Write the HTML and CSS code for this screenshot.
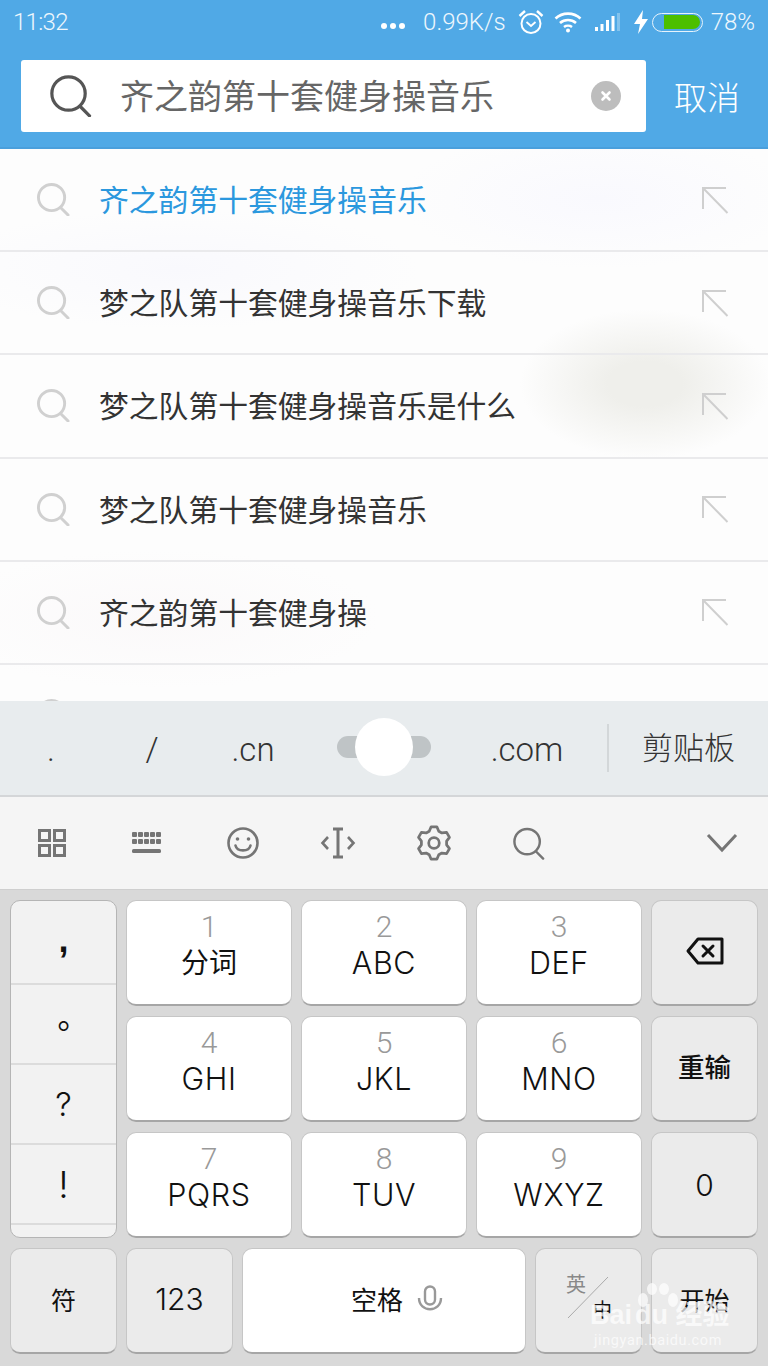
FILE: index.html
```html
<!DOCTYPE html>
<html lang="zh-CN">

<head>
    <meta charset="UTF-8">
    <meta name="viewport" content="width=device-width, initial-scale=1.0">
    <title>搜索</title>
    <link rel="stylesheet" href="styles.css">
</head>

<body>

    <svg class="defs" width="0" height="0">
        <symbol id="i-search" viewBox="0 0 34 34">
            <circle cx="15" cy="15" r="13.5" fill="none" stroke="currentColor" />
            <path d="M24.5 25.5L32 33" fill="none" stroke="currentColor" stroke-linecap="round" />
        </symbol>
        <symbol id="i-jump" viewBox="0 0 28 28">
            <path d="M25 2H2V23M2 2L26.5 27" fill="none" stroke="currentColor" stroke-width="2" />
        </symbol>
    </svg>

    <header class="top">
        <div class="status">
            <span class="clock">11:32</span>
            <div class="status-right">
                <span class="dots"><i></i><i></i><i></i></span>
                <span class="speed">0.99K/s</span>
                <svg class="ic-alarm" width="26" height="26" viewBox="0 0 26 26" fill="none" stroke="#fff" stroke-width="2">
                    <circle cx="13" cy="14.5" r="9.5" />
                    <path d="M8.5 13l4.5 4 4.5-4" stroke-width="1.8" />
                    <path d="M1.5 7L7 2M24.5 7L19 2" stroke-width="2.4" />
                </svg>
                <svg class="ic-wifi" width="28" height="22" viewBox="0 0 28 22" fill="none" stroke="#fff" stroke-width="2.6">
                    <path d="M1.5 7.5C8.5 1 19.5 1 26.5 7.5" />
                    <path d="M6 12C10.5 8 17.5 8 22 12" />
                    <path d="M10 16C12.2 14.4 15.8 14.4 18 16" />
                    <circle cx="14" cy="19.5" r="2" fill="#fff" stroke="none" />
                </svg>
                <svg class="ic-signal" width="27" height="18" viewBox="0 0 27 18">
                    <rect x="0" y="14" width="3" height="4" fill="#fff" />
                    <rect x="5.5" y="11" width="3" height="7" fill="#fff" />
                    <rect x="11" y="7" width="3" height="11" fill="#fff" />
                    <rect x="16.500" y="3" width="3" height="15" fill="#fff" />
                    <rect x="22" y="0" width="3" height="18" fill="#fff" opacity=".3" />
                </svg>
                <svg class="ic-bolt" width="14" height="24" viewBox="0 0 14 24">
                    <path d="M9 0L0 14H6L4 24L14 9H8Z" fill="#fff" />
                </svg>
                <span class="battery"><span class="battery-fill"></span></span>
                <span class="percent">78%</span>
            </div>
        </div>
        <div class="search-row">
            <div class="search-box">
                <svg class="search-icon"><use href="#i-search" /></svg>
                <span class="search-text">齐之韵第十套健身操音乐</span>
                <svg class="search-clear" width="30" height="30" viewBox="0 0 30 30">
                    <circle cx="15" cy="15" r="15" fill="#bdbdbd" />
                    <path d="M11.500 11.500l7 7M18.500 11.500l-7 7" stroke="#fff" stroke-width="2.600" stroke-linecap="round" />
                </svg>
            </div>
            <span class="cancel">取消</span>
        </div>
    </header>

    <ul class="list">
        <li class="row">
            <svg class="row-search"><use href="#i-search" /></svg>
            <span class="row-text active">齐之韵第十套健身操音乐</span>
            <svg class="row-jump"><use href="#i-jump" /></svg>
        </li>
        <li class="row">
            <svg class="row-search"><use href="#i-search" /></svg>
            <span class="row-text">梦之队第十套健身操音乐下载</span>
            <svg class="row-jump"><use href="#i-jump" /></svg>
        </li>
        <li class="row">
            <svg class="row-search"><use href="#i-search" /></svg>
            <span class="row-text">梦之队第十套健身操音乐是什么</span>
            <svg class="row-jump"><use href="#i-jump" /></svg>
        </li>
        <li class="row">
            <svg class="row-search"><use href="#i-search" /></svg>
            <span class="row-text">梦之队第十套健身操音乐</span>
            <svg class="row-jump"><use href="#i-jump" /></svg>
        </li>
        <li class="row">
            <svg class="row-search"><use href="#i-search" /></svg>
            <span class="row-text">齐之韵第十套健身操</span>
            <svg class="row-jump"><use href="#i-jump" /></svg>
        </li>
        <li class="row">
            <svg class="row-search"><use href="#i-search" /></svg>
        </li>
    </ul>

    <div class="suggest">
        <span class="sug sug-dot">.</span>
        <span class="sug sug-slash">/</span>
        <span class="sug sug-cn">.cn</span>
        <span class="sug-slider"><span class="sug-track"></span><span class="sug-thumb"></span></span>
        <span class="sug sug-com">.com</span>
        <span class="sug-clip">剪贴板</span>
    </div>

    <div class="toolbar">
        <span class="tool">
            <svg width="36" height="36" viewBox="0 0 36 36" fill="none" stroke="#757575" stroke-width="3">
                <rect x="5.500" y="5.500" width="10" height="10" />
                <rect x="20.500" y="5.500" width="10" height="10" />
                <rect x="5.500" y="20.500" width="10" height="10" />
                <rect x="20.500" y="20.500" width="10" height="10" />
            </svg>
        </span>
        <span class="tool">
            <svg width="36" height="36" viewBox="0 0 36 36" fill="#757575">
                <rect x="3" y="7" width="5" height="5" rx="1" /><rect x="9" y="7" width="5" height="5" rx="1" /><rect x="15" y="7" width="5" height="5" rx="1" /><rect x="21" y="7" width="5" height="5" rx="1" /><rect x="27" y="7" width="5" height="5" rx="1" />
                <rect x="3" y="14" width="5" height="5" rx="1" /><rect x="9" y="14" width="5" height="5" rx="1" /><rect x="15" y="14" width="5" height="5" rx="1" /><rect x="21" y="14" width="5" height="5" rx="1" /><rect x="27" y="14" width="5" height="5" rx="1" />
                <rect x="3" y="24" width="29" height="4" rx="1.500" />
            </svg>
        </span>
        <span class="tool">
            <svg width="36" height="36" viewBox="0 0 36 36" fill="none" stroke="#757575" stroke-width="2.6">
                <circle cx="18" cy="18" r="14.500" />
                <circle cx="12.500" cy="14" r="1.800" fill="#757575" stroke="none" />
                <circle cx="23.500" cy="14" r="1.800" fill="#757575" stroke="none" />
                <path d="M10.500 20.500C12 27 24 27 25.500 20.500" stroke-linecap="round" />
            </svg>
        </span>
        <span class="tool">
            <svg width="36" height="36" viewBox="0 0 36 36" fill="none" stroke="#757575" stroke-width="2.6">
                <path d="M8 12L2.500 18L8 24M28 12L33.500 18L28 24" />
                <path d="M18 4V32M13 4H23M13 32H23" stroke-width="3" />
            </svg>
        </span>
        <span class="tool">
            <svg width="36" height="36" viewBox="0 0 34 34" fill="none" stroke="#757575" stroke-width="2.6" stroke-linejoin="round">
                <path d="M14.300 1.700L19.700 1.700L21.500 5.900L24.400 7.500L28.900 7L31.600 11.700L28.900 15.300L28.900 18.700L31.600 22.300L28.900 27L24.400 26.500L21.500 28.100L19.700 32.300L14.300 32.300L12.500 28.100L9.600 26.500L5.100 27L2.400 22.300L5.100 18.700L5.100 15.300L2.400 11.700L5.100 7L9.600 7.500L12.500 5.900Z" />
                <circle cx="17" cy="17" r="5" />
            </svg>
        </span>
        <span class="tool">
            <svg class="tool-search"><use href="#i-search" /></svg>
        </span>
        <span class="tool tool-last">
            <svg width="32" height="20" viewBox="0 0 32 20" fill="none" stroke="#757575" stroke-width="3">
                <path d="M2 2L16 17L30 2" />
            </svg>
        </span>
    </div>

    <div class="keyboard">
        <div class="key key-punct">
            <span class="punct punct-comma">,</span>
            <span class="punct punct-stop">。</span>
            <span class="punct punct-ask">?</span>
            <span class="punct punct-bang">!</span>
            <span class="punct punct-end"></span>
        </div>

        <div class="key key-wide"><span class="num">1</span><span class="label label-cjk">分词</span></div>
        <div class="key key-mid"><span class="num">2</span><span class="label">ABC</span></div>
        <div class="key key-wide-r"><span class="num">3</span><span class="label">DEF</span></div>
        <div class="key key-fn key-side">
            <svg class="ic-back" width="38" height="28" viewBox="0 0 38 28" fill="none" stroke="#111" stroke-width="3">
                <path d="M12 2H36V26H12L2 14Z" stroke-linejoin="round" />
                <path d="M17 9L27 19M27 9L17 19" stroke-linecap="round" />
            </svg>
        </div>

        <div class="key key-wide"><span class="num">4</span><span class="label">GHI</span></div>
        <div class="key key-mid"><span class="num">5</span><span class="label">JKL</span></div>
        <div class="key key-wide-r"><span class="num">6</span><span class="label">MNO</span></div>
        <div class="key key-fn key-side key-text key-bold">重输</div>

        <div class="key key-wide"><span class="num">7</span><span class="label">PQRS</span></div>
        <div class="key key-mid"><span class="num">8</span><span class="label">TUV</span></div>
        <div class="key key-wide-r"><span class="num">9</span><span class="label">WXYZ</span></div>
        <div class="key key-fn key-side key-num">0</div>

        <div class="key key-fn key-text key-low">符</div>
        <div class="key key-fn key-num key-low">123</div>
        <div class="key key-space">
            <span class="space-text">空格</span>
            <svg width="26" height="28" viewBox="0 0 26 28" fill="none" stroke="#999" stroke-width="2.4">
                <rect x="8" y="1.500" width="10" height="18" rx="5" />
                <path d="M2 13C2 28 24 28 24 13" />
            </svg>
        </div>
        <div class="key key-fn key-lang">
            <span class="lang-en">英</span>
            <span class="lang-zh">中</span>
            <svg class="lang-slash" width="42" height="43" viewBox="0 0 42 43">
                <path d="M41 1L1 42" stroke="#aaa" stroke-width="1" />
            </svg>
        </div>
        <div class="key key-fn key-side key-text key-low">开始</div>
    </div>

    <div class="watermark">
        <svg class="paw" width="42" height="46" viewBox="0 0 42 46" fill="#fff" opacity=".7">
            <ellipse cx="6" cy="17" rx="5" ry="7" />
            <ellipse cx="15" cy="6" rx="5" ry="6" />
            <ellipse cx="27" cy="6" rx="5" ry="6" />
            <ellipse cx="36" cy="17" rx="5" ry="7" />
        </svg>
        <div class="wm-brand">Bai<span class="wm-du">du</span> 经验</div>
        <div class="wm-url">jingyan.baidu.com</div>
    </div>

</body>

</html>
```

FILE: styles.css
```css
:root {
    --sans: Roboto, "Noto Sans CJK SC", sans-serif;
    --key-sans: Inter, "Noto Sans CJK SC", sans-serif;
    --blue: #50a9e6;
}

* {
    margin: 0;
    padding: 0;
    box-sizing: border-box;
}

body {
    position: relative;
    width: 768px;
    height: 1366px;
    overflow: hidden;
    display: flex;
    flex-direction: column;
    font-family: var(--sans);
    font-weight: 300;
    background-color: #fff;
}

.defs {
    position: absolute;
}

/* top bar */
.top {
    height: 149px;
    flex: none;
    background-color: var(--blue);
    border-bottom: 2px solid #4a9fdc;
}

.status {
    height: 44px;
    padding: 0 13px;
    display: flex;
    align-items: center;
    justify-content: space-between;
    color: #eef7fd;
    font-size: 24px;
}

.clock {
    letter-spacing: -.7px;
}

.status-right {
    display: flex;
    align-items: center;
}

.dots {
    display: flex;
    gap: 3px;
    margin-right: 18px;
    padding-top: 7px;
}

.dots i {
    width: 6px;
    height: 6px;
    border-radius: 50%;
    background-color: #fff;
}

.ic-alarm {
    margin-left: 12px;
}

.ic-wifi {
    margin-left: 10px;
}

.ic-signal {
    margin-left: 13px;
}

.ic-bolt {
    margin-left: 12px;
}

.battery {
    width: 51px;
    height: 19px;
    margin-left: 4px;
    display: flex;
    justify-content: flex-end;
    padding: 1.500px;
    border: 1.500px solid #e6f3fc;
    border-radius: 10px;
}

.battery-fill {
    width: 36px;
    background-color: #4cbf00;
    border-radius: 0 7px 7px 0;
}

.percent {
    margin-left: 8px;
}

.search-row {
    height: 72px;
    margin-top: 16px;
    padding-left: 21px;
    display: flex;
    align-items: center;
}

.search-box {
    width: 625px;
    height: 72px;
    display: flex;
    align-items: center;
    padding: 0 25px 0 29px;
    background-color: #fff;
    border-radius: 3px;
}

.search-icon {
    width: 42px;
    height: 42px;
    color: #555;
    flex: none;
    stroke-width: 2.6;
}

.search-text {
    margin-left: 28px;
    padding-bottom: 4px;
    font-size: 34px;
    font-weight: 400;
    color: #666;
    flex: 1;
    white-space: nowrap;
}

.cancel {
    flex: 1;
    text-align: center;
    font-size: 33px;
    color: #fff;
}

/* suggestions */
.list {
    list-style: none;
    height: 552px;
    flex: none;
    overflow: hidden;
    background-color: #fdfdfd;
    background-image:
        radial-gradient(ellipse 125px 75px at 645px 235px, #efefeb 30%, rgba(239, 239, 235, 0) 100%),
        radial-gradient(ellipse 240px 60px at 180px 120px, #f9f9fd, rgba(249, 249, 253, 0)),
        radial-gradient(ellipse 200px 70px at 600px 50px, #f9f9fe, rgba(249, 249, 254, 0)),
        radial-gradient(ellipse 220px 70px at 160px 470px, #fbf9fa, rgba(251, 249, 250, 0));
}

.row {
    height: 103.200px;
    display: flex;
    align-items: center;
    padding: 0 39px 0 37px;
    border-bottom: 2px solid #eaeaec;
}

.row-search {
    width: 33px;
    height: 33px;
    flex: none;
    color: #d0d0d0;
    stroke-width: 3;
}

.row-text {
    flex: 1;
    margin-left: 29px;
    padding-bottom: 3px;
    font-size: 29.800px;
    font-weight: 400;
    color: #333;
    white-space: nowrap;
}

.row-text.active {
    color: #2b98de;
}

.row-jump {
    width: 28px;
    height: 28px;
    flex: none;
    margin-left: auto;
    color: #cfcfcf;
}

/* shortcut bar */
.suggest {
    height: 96px;
    flex: none;
    display: flex;
    align-items: center;
    background-color: #e8ecee;
    border-bottom: 2px solid #d4d6d8;
    color: #333;
}

.sug {
    font-size: 33px;
    text-align: center;
    padding-top: 2px;
}

.sug-dot {
    width: 102px;
}

.sug-slash {
    width: 100px;
}

.sug-cn {
    width: 102px;
}

.sug-slider {
    width: 160px;
    height: 58px;
    margin-top: -3px;
    display: flex;
    align-items: center;
    justify-content: center;
    position: relative;
}

.sug-track {
    width: 94px;
    height: 22px;
    border-radius: 11px;
    background-color: #bfc4c6;
}

.sug-thumb {
    position: absolute;
    top: 0;
    left: 51px;
    width: 58px;
    height: 58px;
    border-radius: 50%;
    background-color: #fff;
}

.sug-com {
    width: 126px;
}

.sug-clip {
    margin-left: 17px;
    height: 48px;
    width: 161px;
    border-left: 2px solid #d3d7d9;
    font-size: 31px;
    line-height: 50px;
    text-align: center;
}

/* tools */
.toolbar {
    height: 93px;
    flex: none;
    padding-left: 4px;
    display: flex;
    align-items: center;
    background-color: #f5f5f5;
    border-bottom: 1px solid #cfcfcf;
}

.tool {
    width: 95.500px;
    display: flex;
    justify-content: center;
}

.tool-last {
    margin-left: auto;
    width: 92px;
}

.tool-search {
    width: 32px;
    height: 33px;
    color: #757575;
    stroke-width: 2.6;
}

/* keyboard */
.keyboard {
    flex: 1;
    padding: 10px 10px 0;
    display: grid;
    grid-template-columns: 107px 107px 50px 166px 50px 107px 107px;
    grid-template-rows: repeat(4, 106px);
    gap: 10px 9px;
    background-color: #d9d9d9;
}

.key {
    display: flex;
    flex-direction: column;
    align-items: center;
    padding-top: 8px;
    background-color: #fff;
    border: 1px solid #c6c6c6;
    border-bottom: 2px solid #a6a6a6;
    border-radius: 10px;
    color: #111;
}

.key-wide {
    grid-column: 2 / 4;
}

.key-mid {
    grid-column: 4;
}

.key-wide-r {
    grid-column: 5 / 7;
}

.key-side {
    grid-column: 7;
}

.key-fn {
    background-color: #ebebeb;
    justify-content: center;
    padding-top: 0;
}

.key-low {
    padding-bottom: 4px;
}

.ic-back {
    margin-bottom: 4px;
}

.key-punct {
    grid-column: 1;
    grid-row: 1 / 4;
    padding-top: 0;
    overflow: hidden;
    background-color: #f2f2f2;
    border-bottom-width: 1px;
    border-color: #b5b5b5;
}

.punct {
    width: 100%;
    height: 80px;
    display: flex;
    align-items: center;
    justify-content: center;
    border-bottom: 2px solid #dcdcdc;
}

.punct-comma {
    height: 84px;
    font-size: 36px;
    font-weight: 700;
    padding-bottom: 4px;
    font-family: "Liberation Sans", sans-serif;
}

.punct-stop {
    font-family: "Noto Sans CJK TC", sans-serif;
    font-size: 32px;
    font-weight: 400;
}

.punct-ask {
    font-size: 33px;
    font-family: var(--key-sans);
}

.punct-bang {
    font-size: 37px;
    font-family: var(--key-sans);
}

.punct-end {
    flex: 1;
    border-bottom: none;
}

.num {
    font-size: 30px;
    line-height: 36px;
    color: #999;
}

.label {
    font-size: 30.500px;
    line-height: 36px;
    letter-spacing: .6px;
    font-family: var(--key-sans);
    font-weight: 300;
}

.label-cjk {
    font-size: 28px;
    line-height: 38px;
    letter-spacing: 0;
    font-family: var(--sans);
    font-weight: 400;
}

.key-text {
    font-size: 25px;
    font-weight: 400;
}

.key-bold {
    font-size: 26.500px;
    font-weight: 500;
    padding-bottom: 6px;
}

.key-num {
    font-size: 30px;
    font-family: var(--key-sans);
    font-weight: 300;
}

.key-space {
    grid-column: 3 / 6;
    flex-direction: row;
    justify-content: center;
    gap: 14px;
    padding: 0 0 4px 26px;
}

.space-text {
    font-size: 26px;
    font-weight: 400;
}

.key-lang {
    position: relative;
    justify-content: flex-start;
    padding-top: 23px;
}

.lang-en {
    align-self: flex-start;
    margin-left: 30px;
    font-size: 20px;
    line-height: 26px;
    font-weight: 400;
    color: #888;
}

.lang-zh {
    align-self: flex-end;
    margin-right: 29px;
    font-size: 19px;
    line-height: 26px;
    font-weight: 400;
}

.lang-slash {
    position: absolute;
    top: 27px;
    left: 31px;
}

/* watermark over the keys */
.watermark {
    position: absolute;
    left: 590px;
    top: 1283px;
    width: 136px;
    height: 66px;
    color: #fff;
    text-align: center;
}

.paw {
    position: absolute;
    top: 0;
    left: 47px;
}

.wm-brand {
    position: absolute;
    top: 16px;
    left: 0;
    width: 100%;
    white-space: nowrap;
    font-family: "Liberation Sans", "Noto Sans CJK SC", sans-serif;
    font-size: 27px;
    line-height: 32px;
    font-weight: 700;
    opacity: .7;
}

.wm-du {
    margin-left: 3px;
}

.wm-url {
    position: absolute;
    top: 49px;
    left: 0;
    width: 100%;
    font-size: 14.500px;
    line-height: 18px;
    letter-spacing: .6px;
    font-weight: 400;
    white-space: nowrap;
    opacity: .7;
}
```
